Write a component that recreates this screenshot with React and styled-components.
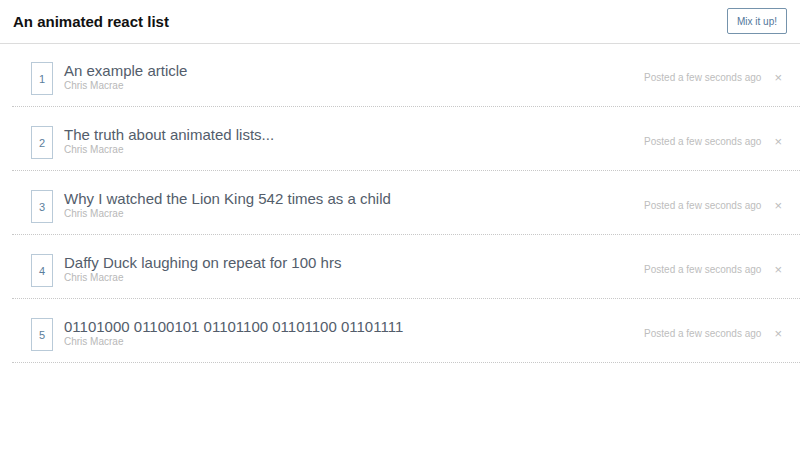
import React from "react";
import styled, { createGlobalStyle } from "styled-components";

const GlobalStyle = createGlobalStyle`
  html, body {
    margin: 0;
    padding: 0;
    background: #fff;
    font-family: "Liberation Sans", Arial, sans-serif;
  }
`;

const Header = styled.header`
  display: flex;
  align-items: center;
  justify-content: space-between;
  height: 43px;
  padding: 0 13px;
  border-bottom: 1px solid #dcdcdc;
`;

const Title = styled.h1`
  margin: 0;
  font-size: 15px;
  font-weight: 700;
  color: #111;
`;

const MixButton = styled.button`
  height: 26px;
  padding: 0 9px;
  margin-top: -1px;
  background: #fff;
  border: 1px solid #7593ac;
  border-radius: 2px;
  color: #52769a;
  font-family: "Liberation Sans", Arial, sans-serif;
  font-size: 10px;
  cursor: pointer;
`;

const List = styled.ul`
  list-style: none;
  margin: -1px 0 0 12px;
  padding: 0;
`;

const Row = styled.li`
  display: flex;
  align-items: flex-start;
  height: 63px;
  box-sizing: content-box;
  padding: 0 18px 0 19px;
  border-bottom: 1px dotted #c8c8c8;
`;

const Rank = styled.div`
  display: flex;
  align-items: center;
  justify-content: center;
  width: 20px;
  height: 31px;
  margin-top: 19px;
  border: 1px solid #b9cad8;
  color: #5b7e9c;
  font-size: 11px;
  flex-shrink: 0;
`;

const Body = styled.div`
  flex: 1;
  margin-left: 11px;
  margin-top: 19px;
  display: flex;
  flex-direction: column;
`;

const ArticleTitle = styled.span`
  font-size: 15px;
  color: #535d6b;
  line-height: 18px;
`;

const Author = styled.span`
  font-size: 10px;
  color: #b8b8b8;
  line-height: 11px;
`;

const Meta = styled.div`
  display: flex;
  align-items: center;
  margin-top: 28px;
`;

const Posted = styled.span`
  font-size: 10px;
  color: #bdbdbd;
`;

const Remove = styled.button`
  margin-left: 13px;
  background: none;
  border: none;
  padding: 0;
  color: #bdbdbd;
  font-size: 13px;
  line-height: 13px;
  font-family: "Liberation Sans", Arial, sans-serif;
  cursor: pointer;
`;

const articles = [
  "An example article",
  "The truth about animated lists...",
  "Why I watched the Lion King 542 times as a child",
  "Daffy Duck laughing on repeat for 100 hrs",
  "01101000 01100101 01101100 01101100 01101111",
];

export default function App() {
  return (
    <>
      <GlobalStyle />
      <Header>
        <Title>An animated react list</Title>
        <MixButton>Mix it up!</MixButton>
      </Header>
      <List>
        {articles.map((title, i) => (
          <Row key={title}>
            <Rank>{i + 1}</Rank>
            <Body>
              <ArticleTitle>{title}</ArticleTitle>
              <Author>Chris Macrae</Author>
            </Body>
            <Meta>
              <Posted>Posted a few seconds ago</Posted>
              <Remove>×</Remove>
            </Meta>
          </Row>
        ))}
      </List>
    </>
  );
}
